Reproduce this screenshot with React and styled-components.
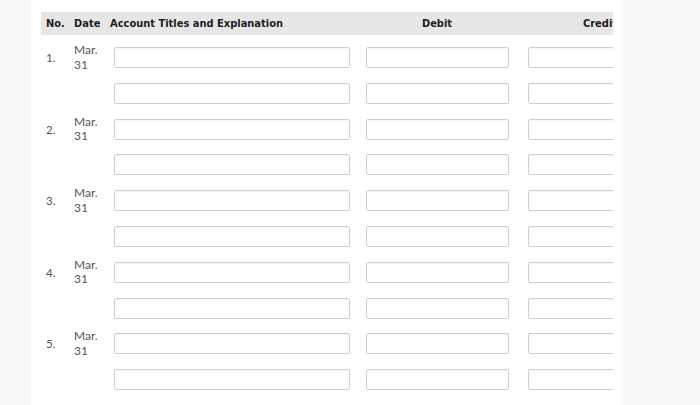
import styled, { createGlobalStyle } from "styled-components";

const GlobalStyle = createGlobalStyle`
    html, body {
        margin: 0;
        padding: 0;
        background: #f7f7f7;
    }
    body {
        font-family: Lato, "Open Sans", "Liberation Sans", sans-serif;
    }
`

const entries = [1, 2, 3, 4, 5]

const App = () => {
    return (
        <>
            <GlobalStyle />
            <StyledPanel>
                <StyledTable>
                    <StyledHeader>
                        <StyledHeadCell pad={5}>No.</StyledHeadCell>
                        <StyledHeadCell pad={4}>Date</StyledHeadCell>
                        <StyledHeadCell pad={2}>Account Titles and Explanation</StyledHeadCell>
                        <StyledHeadCell center>Debit</StyledHeadCell>
                        <StyledHeadCell center>Credit</StyledHeadCell>
                    </StyledHeader>
                    <StyledBody>
                        {entries.map((n) => (
                            <StyledEntry key={n}>
                                <StyledLine>
                                    <StyledNo>{n}.</StyledNo>
                                    <StyledDate>
                                        <span>Mar.</span>
                                        <span>31</span>
                                    </StyledDate>
                                    <StyledInputCell><StyledInput /></StyledInputCell>
                                    <StyledInputCell amount><StyledInput /></StyledInputCell>
                                    <StyledInputCell amount><StyledInput /></StyledInputCell>
                                </StyledLine>
                                <StyledLine>
                                    <span />
                                    <span />
                                    <StyledInputCell><StyledInput /></StyledInputCell>
                                    <StyledInputCell amount><StyledInput /></StyledInputCell>
                                    <StyledInputCell amount><StyledInput /></StyledInputCell>
                                </StyledLine>
                            </StyledEntry>
                        ))}
                    </StyledBody>
                </StyledTable>
            </StyledPanel>
        </>
    )
}

const columns = "29px 38px 248px 162px 164px"

const StyledPanel = styled.div`
    margin-left: 31px;
    width: 591px;
    min-height: 405px;
    box-sizing: border-box;
    padding: 12px 9px 0 10px;
    background: #fff;
`

const StyledTable = styled.div`
    width: 572px;
    overflow: hidden;
`

const StyledHeader = styled.div`
    display: grid;
    grid-template-columns: ${columns};
    grid-template-rows: 23px;
    align-items: center;
    background: #e6e6e6;
`

const StyledHeadCell = styled.div`
    padding-left: ${(p) => (p.center ? 0 : p.pad)}px;
    font-family: "DejaVu Sans Condensed", "DejaVu Sans", sans-serif;
    font-size: 11px;
    font-weight: 700;
    color: #1e1e1e;
    white-space: nowrap;
    text-align: ${(p) => (p.center ? "center" : "left")};
`

const StyledBody = styled.div`
    padding-top: 12px;
`

const StyledEntry = styled.div`
    display: flex;
    flex-direction: column;
`

const StyledLine = styled.div`
    display: grid;
    grid-template-columns: ${columns};
    grid-template-rows: 21px;
    height: 21px;
    align-items: center;
    margin-bottom: 14.8px;
`

const StyledNo = styled.div`
    padding-left: 5px;
    font-size: 11.5px;
    color: #555;
`

const StyledDate = styled.div`
    display: flex;
    flex-direction: column;
    justify-content: center;
    height: 21px;
    padding-left: 4px;
    font-size: 12px;
    line-height: 14.5px;
    color: #555;
`

const StyledInputCell = styled.div`
    padding: ${(p) => (p.amount ? "0 9px 0 10px" : "0 6px")};
`

const StyledInput = styled.div`
    height: 21px;
    box-sizing: border-box;
    border: 1px solid #cfcfcf;
    border-radius: 2px;
    background: #fff;
    box-shadow: inset 0 1px 1px rgba(0, 0, 0, 0.04);
`

export default App;
